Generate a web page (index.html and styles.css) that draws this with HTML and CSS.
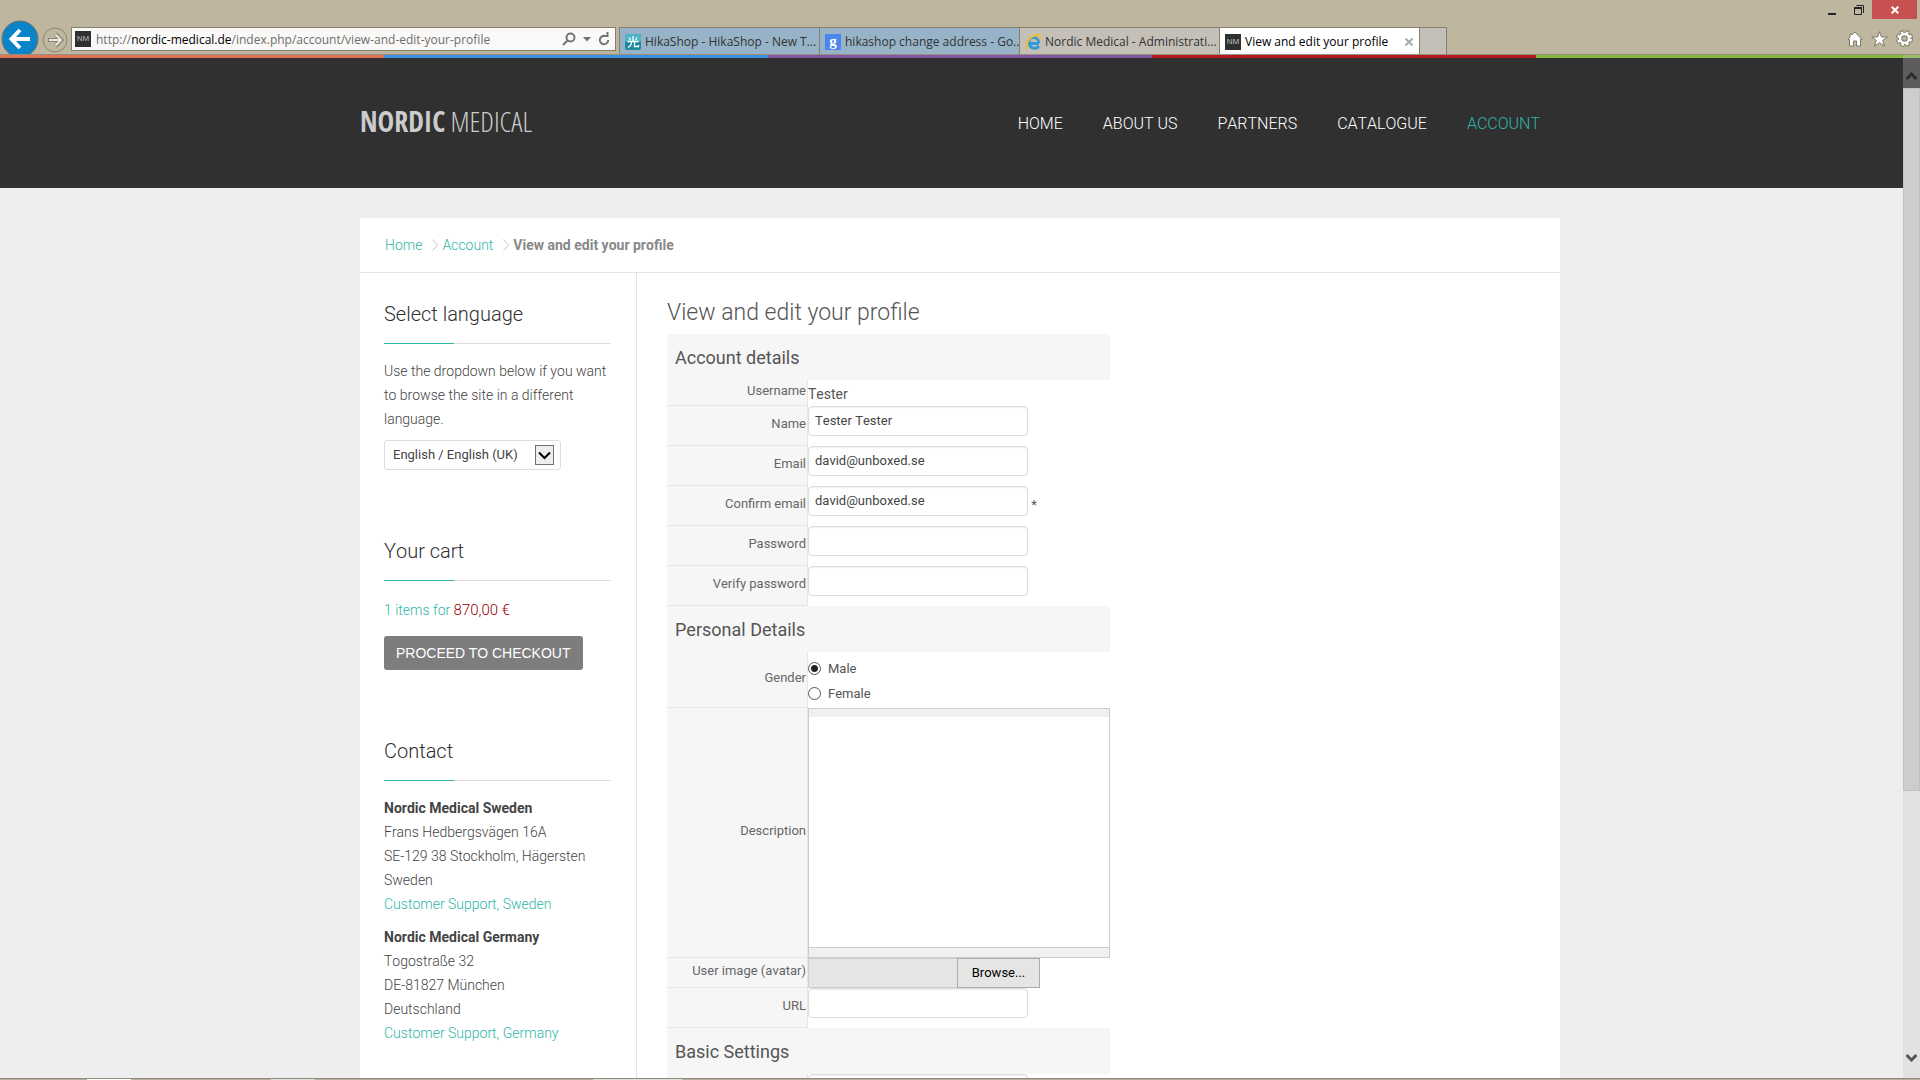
FILE: index.html
```html
<!DOCTYPE html>
<html lang="en">
<head>
    <meta charset="UTF-8">
    <meta name="viewport" content="width=device-width, initial-scale=1.0">
    <title>View and edit your profile</title>
    <link rel="stylesheet" href="styles.css">
</head>
<body>
    <!-- Browser window -->
    <div class="browser">
        <div class="titlebar">
            <button class="win-btn" aria-label="Minimize">
                <svg width="8" height="12" viewBox="0 0 8 12"><rect y="9" width="8" height="2" fill="#222"/></svg>
            </button>
            <button class="win-btn" aria-label="Restore">
                <svg width="10" height="10" viewBox="0 0 10 10" fill="none" stroke="#222"><path d="M2.5 0.5H9.5V8"/><path d="M0.5 2.5H7.5V9.5H0.5Z"/><path d="M0 3H8" stroke-width="2"/></svg>
            </button>
            <button class="win-btn win-close" aria-label="Close">
                <svg width="8" height="8" viewBox="0 0 8 8" stroke="#fff" stroke-width="2"><path d="M0.7 0.7L7.3 7.3M7.3 0.7L0.7 7.3"/></svg>
            </button>
        </div>
        <div class="toolbar">
            <div class="history">
                <button class="back" aria-label="Back">
                    <svg width="38" height="38" viewBox="0 0 38 38"><circle cx="19" cy="19" r="18" fill="#0a84c8" stroke="#6f7268"/><path d="M29 19H11M19 10L10.500 19L19 28" fill="none" stroke="#fff" stroke-width="4"/></svg>
                </button>
                <button class="forward" aria-label="Forward">
                    <svg width="26" height="26" viewBox="0 0 26 26" fill="none"><circle cx="13" cy="13" r="12" stroke="#8b8570"/><path d="M6 13H19M13.500 7L19.500 13L13.500 19" stroke="#8b8570" stroke-width="4"/><path d="M7 13H18M13.500 7.500L19 13L13.500 18.500" stroke="#e9e6df" stroke-width="2"/></svg>
                </button>
            </div>
            <div class="address">
                <span class="nm-icon">NM</span>
                <span class="url">http://<b>nordic-medical.de</b>/index.php/account/view-and-edit-your-profile</span>
                <button class="icon-btn" aria-label="Search">
                    <svg width="14" height="14" viewBox="0 0 14 14" fill="none" stroke="#747474"><circle cx="8.500" cy="5.500" r="4" stroke-width="2"/><path d="M5.500 8.500L1 13" stroke-width="2"/></svg>
                </button>
                <button class="icon-btn" aria-label="Show address list">
                    <svg width="8" height="5" viewBox="0 0 8 5"><path d="M0 0H8L4 4.500Z" fill="#747474"/></svg>
                </button>
                <button class="icon-btn" aria-label="Refresh">
                    <svg width="12" height="14" viewBox="0 0 12 14" fill="none" stroke="#747474" stroke-width="2"><path d="M7 4A4.200 4.200 0 1 0 10.200 8"/><path d="M5 4H9.500V0" /></svg>
                </button>
            </div>
            <div class="tabs">
                <a href="#" class="tab tab-blue">
                    <svg width="16" height="16" viewBox="0 0 16 16"><rect width="16" height="16" rx="2" fill="#1f8a9d"/><rect width="16" height="8" rx="2" fill="#4fb4c6"/><path d="M8 2V7M4 3.500L5.500 6M12 3.500L10.500 6M2.500 7.500H13.500M6.500 8C6.500 11 5 12.500 3 13.500M9.500 8V12.500H13.500V11" fill="none" stroke="#fff" stroke-width="1.300"/></svg>
                    <span>HikaShop - HikaShop - New T...</span>
                </a>
                <a href="#" class="tab tab-blue">
                    <svg width="16" height="16" viewBox="0 0 16 16"><rect width="16" height="16" rx="1" fill="#4a86f0"/><text x="8" y="12" text-anchor="middle" class="g-letter">g</text></svg>
                    <span>hikashop change address - Go...</span>
                </a>
                <a href="#" class="tab">
                    <svg width="16" height="16" viewBox="0 0 16 16" fill="none"><path d="M14 9.500H4.500C4.500 15 12 15.500 13.800 12M4 8.500C4.300 2 13.500 2 13.800 9" stroke="#2f9ad8" stroke-width="2.800"/><path d="M2.500 15C-2 11 7 -0.500 14.500 1C16 1.500 15.500 4 14.500 5.500" stroke="#f2bf28" stroke-width="1.800"/></svg>
                    <span>Nordic Medical - Administrati...</span>
                </a>
                <a href="#" class="tab tab-active">
                    <span class="nm-icon">NM</span>
                    <span>View and edit your profile</span>
                    <svg class="tab-close" width="8" height="8" viewBox="0 0 8 8" stroke="#a8a8a8" stroke-width="2"><path d="M0.500 0.500L7.500 7.500M7.500 0.500L0.500 7.500"/></svg>
                </a>
                <button class="new-tab" aria-label="New tab"></button>
            </div>
            <div class="tools">
                <button class="icon-btn" aria-label="Home">
                    <svg width="16" height="16" viewBox="0 0 16 16"><path d="M8 1L15 8.500H13.500V15H9.500V10H6.500V15H2.500V8.500H1L3 6V3H5V4Z" fill="#fff" stroke="#7d7868"/></svg>
                </button>
                <button class="icon-btn" aria-label="Favorites">
                    <svg width="17" height="16" viewBox="0 0 17 16"><path d="M8.500 0.700L10.500 6H16.300L11.700 9.400L13.500 15.200L8.500 11.700L3.500 15.200L5.300 9.400L0.700 6H6.500Z" fill="#fff" stroke="#7d7868"/></svg>
                </button>
                <button class="icon-btn" aria-label="Tools">
                    <svg width="17" height="17" viewBox="0 0 17 17"><circle cx="8.500" cy="8.500" r="6.500" fill="none" stroke="#7d7868" stroke-width="4" stroke-dasharray="3.600 1.500"/><circle cx="8.500" cy="8.500" r="4.500" fill="none" stroke="#7d7868" stroke-width="4.500"/><circle cx="8.500" cy="8.500" r="6.500" fill="none" stroke="#fff" stroke-width="2" stroke-dasharray="2.600 2.500" stroke-dashoffset="-0.500"/><circle cx="8.500" cy="8.500" r="4.500" fill="none" stroke="#fff" stroke-width="2.500"/></svg>
                </button>
            </div>
        </div>
    </div>

    <!-- Web site -->
    <div class="viewport">
        <div class="stripe"><i></i><i></i><i></i><i></i><i></i></div>
        <header class="site-header">
            <div class="wrapper header-inner">
                <a href="#" class="logo"><b>NORDIC</b> MEDICAL</a>
                <nav class="menu">
                    <a href="#">HOME</a>
                    <a href="#">ABOUT US</a>
                    <a href="#">PARTNERS</a>
                    <a href="#">CATALOGUE</a>
                    <a href="#" class="active">ACCOUNT</a>
                </nav>
            </div>
        </header>

        <div class="wrapper page">
            <nav class="breadcrumbs">
                <a href="#">Home</a>
                <svg width="6" height="12" viewBox="0 0 6 12" fill="none" stroke="#c4c4c4"><path d="M0.500 0.500L5.500 6L0.500 11.500"/></svg>
                <a href="#">Account</a>
                <svg width="6" height="12" viewBox="0 0 6 12" fill="none" stroke="#c4c4c4"><path d="M0.500 0.500L5.500 6L0.500 11.500"/></svg>
                <strong>View and edit your profile</strong>
            </nav>

            <div class="columns">
                <aside class="sidebar">
                    <section class="module">
                        <h3>Select language</h3>
                        <p><label for="language">Use the dropdown below if you want to browse the site in a different language.</label></p>
                        <div class="select-box">
                            <select id="language">
                                <option>English / English (UK)</option>
                            </select>
                            <span class="select-arrow"><svg width="13" height="9" viewBox="0 0 13 9" fill="none" stroke="#000" stroke-width="2"><path d="M1 1.500L6.500 7L12 1.500"/></svg></span>
                        </div>
                    </section>

                    <section class="module">
                        <h3>Your cart</h3>
                        <p class="cart-total"><a href="#">1 items for <span class="price">870,00 €</span></a></p>
                        <button class="checkout">PROCEED TO CHECKOUT</button>
                    </section>

                    <section class="module">
                        <h3>Contact</h3>
                        <p><strong>Nordic Medical Sweden</strong><br>
                        Frans Hedbergsvägen 16A<br>
                        SE-129 38 Stockholm, Hägersten<br>
                        Sweden<br>
                        <a href="#">Customer Support, Sweden</a></p>
                        <p><strong>Nordic Medical Germany</strong><br>
                        Togostraße 32<br>
                        DE-81827 München<br>
                        Deutschland<br>
                        <a href="#">Customer Support, Germany</a></p>
                    </section>
                </aside>

                <main class="content">
                    <h1>View and edit your profile</h1>
                    <form>
                        <table class="profile">
                            <tr><th colspan="2" class="group">Account details</th></tr>
                            <tr>
                                <td class="key">Username</td>
                                <td class="value">Tester</td>
                            </tr>
                            <tr>
                                <td class="key"><label for="name">Name</label></td>
                                <td><input type="text" id="name" value="Tester Tester"></td>
                            </tr>
                            <tr>
                                <td class="key"><label for="email">Email</label></td>
                                <td><input type="text" id="email" value="david@unboxed.se"></td>
                            </tr>
                            <tr>
                                <td class="key"><label for="email2">Confirm email</label></td>
                                <td><input type="text" id="email2" value="david@unboxed.se"> <span class="required">*</span></td>
                            </tr>
                            <tr>
                                <td class="key"><label for="password">Password</label></td>
                                <td><input type="password" id="password"></td>
                            </tr>
                            <tr>
                                <td class="key"><label for="password2">Verify password</label></td>
                                <td><input type="password" id="password2"></td>
                            </tr>

                            <tr><th colspan="2" class="group">Personal Details</th></tr>
                            <tr>
                                <td class="key">Gender</td>
                                <td class="radios">
                                    <label><input type="radio" name="gender" checked> Male</label>
                                    <label><input type="radio" name="gender"> Female</label>
                                </td>
                            </tr>
                            <tr>
                                <td class="key"><label for="description">Description</label></td>
                                <td>
                                    <div class="editor">
                                        <textarea id="description"></textarea>
                                    </div>
                                </td>
                            </tr>
                            <tr>
                                <td class="key"><label for="avatar">User image (avatar)</label></td>
                                <td>
                                    <div class="file">
                                        <input type="text" id="avatar" readonly>
                                        <button type="button">Browse...</button>
                                    </div>
                                </td>
                            </tr>
                            <tr>
                                <td class="key"><label for="website">URL</label></td>
                                <td><input type="text" id="website"></td>
                            </tr>

                            <tr><th colspan="2" class="group">Basic Settings</th></tr>
                            <tr>
                                <td class="key"></td>
                                <td><input type="text" aria-label="Setting"></td>
                            </tr>
                        </table>
                    </form>
                </main>
            </div>
        </div>

        <div class="scrollbar">
            <svg class="scroll-up" width="11" height="8" viewBox="0 0 11 8" fill="none" stroke="#2c2c2c" stroke-width="3"><path d="M0.500 7L5.500 2L10.500 7"/></svg>
            <div class="thumb"></div>
            <svg class="scroll-down" width="11" height="8" viewBox="0 0 11 8" fill="none" stroke="#555" stroke-width="3"><path d="M0.500 1L5.500 6L10.500 1"/></svg>
        </div>
    </div>
    <div class="taskbar"></div>
</body>
</html>
```
FILE: styles.css
```css
* {
    box-sizing: border-box;
}

body {
    display: flex;
    flex-direction: column;
    height: 100vh;
    margin: 0;
    overflow: hidden;
    font: 300 14px/24px Roboto, sans-serif;
    font-kerning: none;
    color: #444;
    background: #eee;
}

a {
    color: #2fb5aa;
    text-decoration: none;
}

strong {
    font-weight: 700;
}

button, input, select, textarea {
    font: inherit;
    margin: 0;
}

svg {
    display: block;
    flex: none;
}

/* Browser window */
.browser {
    flex: none;
    background: #bfb6a0;
    border-bottom: 1px solid #979080;
    font: 12px/16px "Open Sans", sans-serif;
}

.browser button {
    display: flex;
    align-items: center;
    justify-content: center;
    padding: 0;
    border: 0;
    background: none;
}

.titlebar {
    display: flex;
    justify-content: flex-end;
    height: 27px;
    padding-right: 3px;
}

.titlebar .win-btn {
    width: 27px;
    height: 19px;
}

.titlebar .win-close {
    width: 45px;
    background: #c75050;
}

.toolbar {
    display: flex;
    height: 27px;
}

.history {
    display: flex;
    align-items: flex-start;
    flex: none;
    gap: 3px;
    width: 71px;
    height: 27px;
    padding-left: 1px;
}

.history .back {
    align-items: flex-start;
    height: 34px;
    margin-top: -7px;
    overflow: hidden;
}

.address {
    display: flex;
    align-items: center;
    gap: 7px;
    flex: 0 1 545px;
    height: 24px;
    padding: 0 5px 0 3px;
    background: #faf9f7;
    border: 1px solid #85806e;
    color: #6d6d6d;
}

.address .nm-icon {
    margin-right: -2px;
}

.url {
    flex: 1;
    padding-top: 1px;
    white-space: nowrap;
    overflow: hidden;
}

.url b {
    font-weight: 400;
    color: #000;
}

.nm-icon {
    flex: none;
    width: 16px;
    height: 16px;
    background: #303030;
    color: #bbb;
    font: 8px/16px "Liberation Sans", sans-serif;
    text-align: center;
}

.tabs {
    display: flex;
    flex: 0 1 828px;
    margin-left: 3px;
    min-width: 0;
}

.tab {
    display: flex;
    align-items: center;
    gap: 4px;
    flex: 0 1 200px;
    min-width: 0;
    padding: 1px 6px 0 5px;
    background: #c4c0b8;
    border: solid #85806e;
    border-width: 1px 0 0 1px;
    color: #333;
    white-space: nowrap;
}

.tab-blue {
    background: #97b3c7;
}

.tab-active {
    background: #fff;
    color: #000;
}

.tab-close {
    margin-left: auto;
}

.g-letter {
    font: bold 15px "Liberation Serif", serif;
    fill: #fff;
}

.tabs .new-tab {
    width: 28px;
    background: #c4c0b8;
    border: 1px solid #85806e;
    border-bottom: 0;
}

.tools {
    display: flex;
    align-items: center;
    gap: 8px;
    margin-left: auto;
    padding: 0 7px 4px 0;
}

/* Web site */
.viewport {
    position: relative;
    flex: 1;
    min-height: 0;
    overflow: hidden;
}

.stripe {
    display: flex;
    height: 3px;
}

.stripe i {
    flex: 1;
    background: #e07256;
}

.stripe i:nth-child(2) { background: #4090e0; }
.stripe i:nth-child(3) { background: #8056a0; }
.stripe i:nth-child(4) { background: #b51a1e; }
.stripe i:nth-child(5) { background: #86ba3c; }

.wrapper {
    width: 100%;
    max-width: 1200px;
    margin: 0 auto;
}

.site-header {
    background: #303030;
}

.header-inner {
    display: flex;
    align-items: center;
    justify-content: space-between;
    height: 130px;
}

.logo {
    padding-bottom: 4px;
    font: 300 28px/40px "Open Sans Condensed Light", "Liberation Sans Narrow", "Roboto Condensed", sans-serif;
    color: #ccc;
    white-space: nowrap;
}

.logo b {
    font-family: "Open Sans Condensed", "Liberation Sans Narrow", sans-serif;
    font-weight: 700;
}

.menu {
    display: flex;
}

.menu a {
    padding: 2px 20px 0;
    font-size: 16px;
    color: #fff;
}

.menu a.active {
    color: #2fb5aa;
}

.page {
    margin-top: 30px;
    background: #fff;
}

.breadcrumbs {
    display: flex;
    align-items: center;
    gap: 4px;
    height: 55px;
    padding: 0 25px;
    border-bottom: 1px solid #e3e3e3;
}

.breadcrumbs svg {
    margin-left: 6px;
}

.breadcrumbs strong {
    color: #888;
}

.columns {
    display: flex;
}

.sidebar {
    flex: none;
    width: 277px;
    padding: 29px 25px 29px 24px;
    border-right: 1px solid #e3e3e3;
}

.module {
    margin-bottom: 69px;
}

.module h3 {
    margin: 0 0 15px;
    padding-bottom: 17px;
    font: 300 20px/24px Roboto, sans-serif;
    font-kerning: none;
    color: #303030;
    border-bottom: 1px solid #ddd;
    border-image: linear-gradient(to right, #2fb5aa 70px, #ddd 70px) 1;
}

.module p {
    margin: 0 0 9px;
}

.module .cart-total {
    margin-bottom: 12px;
    line-height: 28px;
}

.select-box {
    position: relative;
    width: 177px;
    margin-bottom: 9px;
}

select {
    appearance: none;
    display: block;
    width: 100%;
    height: 30px;
    padding: 0 8px;
    background: #fff;
    border: 1px solid #ddd;
    border-radius: 3px;
    font-size: 13px;
    font-weight: 400;
    color: #444;
}

.select-arrow {
    position: absolute;
    top: 5px;
    right: 7px;
    display: flex;
    align-items: center;
    justify-content: center;
    width: 19px;
    height: 20px;
    background: #eee;
    border: 1px solid #707070;
    pointer-events: none;
}

.price {
    font-size: 15px;
    color: #900;
}

.checkout {
    display: block;
    height: 34px;
    padding: 0 12px 1px;
    border: 0;
    border-radius: 3px;
    background: #7d7d7d;
    color: #fff;
    font: 14px/32px "Liberation Sans", Arial, sans-serif;
}

.content {
    flex: 1;
    padding: 24px 30px 0;
}

h1 {
    margin: 0 0 5px;
    font: 300 23px/32px Roboto, sans-serif;
    color: #555;
}

/* Profile form */
.profile {
    width: 443px;
    border-collapse: separate;
    border-spacing: 0;
    font-size: 13px;
    font-weight: 400;
    color: #555;
}

.profile td {
    padding: 0;
    line-height: 24px;
}

.profile .group {
    height: 46px;
    padding: 2px 8px 0;
    background: #f6f6f6;
    font-size: 18px;
    font-weight: 400;
    text-align: left;
}

.profile .key {
    width: 141px;
    padding: 0 1px 3px 0;
    background: #f6f6f6;
    border: solid #e6e6e6;
    border-width: 0 1px 1px 0;
    color: #666;
    text-align: right;
    line-height: 20px;
}

.profile .value {
    padding-top: 2px;
    font-size: 14px;
}

input[type="text"], input[type="password"] {
    width: 220px;
    height: 30px;
    margin-bottom: 10px;
    padding: 0 6px 2px;
    border: 1px solid #ddd;
    border-radius: 4px;
    box-shadow: inset 0 1px 2px #eee;
    font-size: 13px;
    color: #444;
    vertical-align: top;
}

.required {
    line-height: 38px;
}

.profile .radios {
    padding: 4px 0 2px;
}

.radios label {
    display: flex;
    align-items: center;
    gap: 7px;
    line-height: 25px;
}

.radios input {
    appearance: none;
    width: 13px;
    height: 13px;
    border: 1px solid #555;
    border-radius: 50%;
    background: #fff;
}

.radios input:checked {
    background: radial-gradient(#222 3px, #fff 4px);
}

.editor {
    padding: 8px 0 9px;
    border: 1px solid #ccc;
    background: #f0f0ee;
}

.editor textarea {
    display: block;
    width: 100%;
    height: 231px;
    border: 0;
    border-bottom: 1px solid #ccc;
    resize: none;
}

.file {
    display: flex;
}

.file input[type="text"] {
    width: 149px;
    margin: 0;
    background: #e5e5e5;
    border: 1px solid #ccc;
    border-right: 0;
    border-radius: 0;
    box-shadow: none;
}

.file button {
    width: 83px;
    height: 30px;
    background: #e5e5e5;
    border: 1px solid #aaa;
    color: #000;
}

/* Scrollbar over the page */
.scrollbar {
    position: absolute;
    top: 0;
    right: 0;
    bottom: 0;
    display: flex;
    flex-direction: column;
    align-items: center;
    width: 17px;
    background: rgba(200, 200, 200, 0.3);
}

.scroll-up {
    margin: 17px 0 8px;
}

.thumb {
    width: 17px;
    height: 703px;
    background: #cdcdcd;
    border: 1px solid #c0c0c0;
}

.scroll-down {
    margin: auto 0 16px;
}

/* Upper edge of the windows behind */
.taskbar {
    flex: none;
    height: 2px;
    border-top: 1px solid #918c7e;
    background: linear-gradient(to right, #b5aea0 87px, #fff 87px, #fff 131px, #b5aea0 131px, #b5aea0 271px, #ddd 271px, #ddd 315px, #b5aea0 315px, #b5aea0 593px, #ddd 593px, #ddd 682px, #b5aea0 682px);
}
```
